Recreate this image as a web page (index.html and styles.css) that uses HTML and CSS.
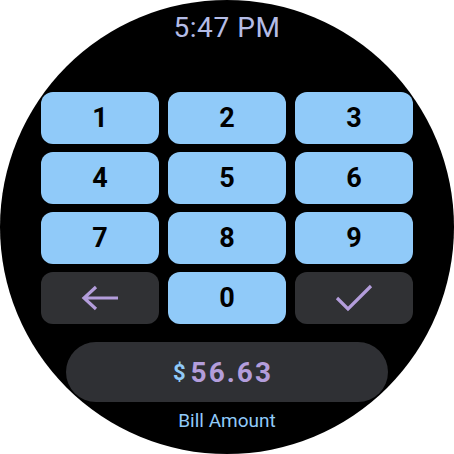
FILE: index.html
```html
<!DOCTYPE html>
<html>
<head>
<meta charset="utf-8">
<link rel="stylesheet" href="styles.css">
</head>
<body>
<div class="watch">
  <div class="time">5:47 PM</div>
  <div class="keypad">
    <div class="key">1</div>
    <div class="key">2</div>
    <div class="key">3</div>
    <div class="key">4</div>
    <div class="key">5</div>
    <div class="key">6</div>
    <div class="key">7</div>
    <div class="key">8</div>
    <div class="key">9</div>
    <div class="key dark">
      <svg width="38" height="26" viewBox="0 0 38 26"><path d="M37 13H3M15 2L3 13L15 24" fill="none" stroke="#b39ddb" stroke-width="3.2"/></svg>
    </div>
    <div class="key">0</div>
    <div class="key dark">
      <svg width="38" height="28" viewBox="0 0 38 28"><path d="M2 14L13 25L36 2" fill="none" stroke="#b39ddb" stroke-width="3.2"/></svg>
    </div>
  </div>
  <div class="amount"><span class="dollar">$</span><span class="value">56.63</span></div>
  <div class="label">Bill Amount</div>
</div>
</body>
</html>
```
FILE: styles.css
```css
html, body { margin: 0; padding: 0; background: #fff; }
body { width: 454px; height: 454px; font-family: Roboto, "Noto Sans", sans-serif; }
.watch {
  width: 454px; height: 454px; border-radius: 50%; background: #000;
  overflow: hidden; display: flex; flex-direction: column; align-items: center;
}
.time {
  margin-top: 14px; height: 28px; line-height: 28px;
  font-size: 28px; color: #b4bce6; letter-spacing: 0.6px;
}
.keypad {
  margin-top: 50px; width: 372px;
  display: grid; grid-template-columns: repeat(3, 1fr); grid-auto-rows: 52px;
  column-gap: 9px; row-gap: 8px;
}
.key {
  background: #90caf9; border-radius: 12px;
  display: flex; align-items: center; justify-content: center;
  font-size: 27px; font-weight: 700; color: #000;
}
.key.dark { background: #303134; }
.amount {
  margin-top: 18px; width: 322px; height: 60px; border-radius: 30px;
  background: #2f3034; box-shadow: 0 2px 4px rgba(0,0,0,0.5);
  display: flex; align-items: center; justify-content: center; gap: 5px;
  padding-right: 8px; box-sizing: border-box;
}
.dollar { color: #90caf9; font-size: 22px; font-weight: 700; }
.value { color: #b39ddb; font-size: 28px; font-weight: 700; letter-spacing: 2px; }
.label {
  margin-top: 7px; font-size: 19px; color: #90caf9; line-height: 24px;
}
```
